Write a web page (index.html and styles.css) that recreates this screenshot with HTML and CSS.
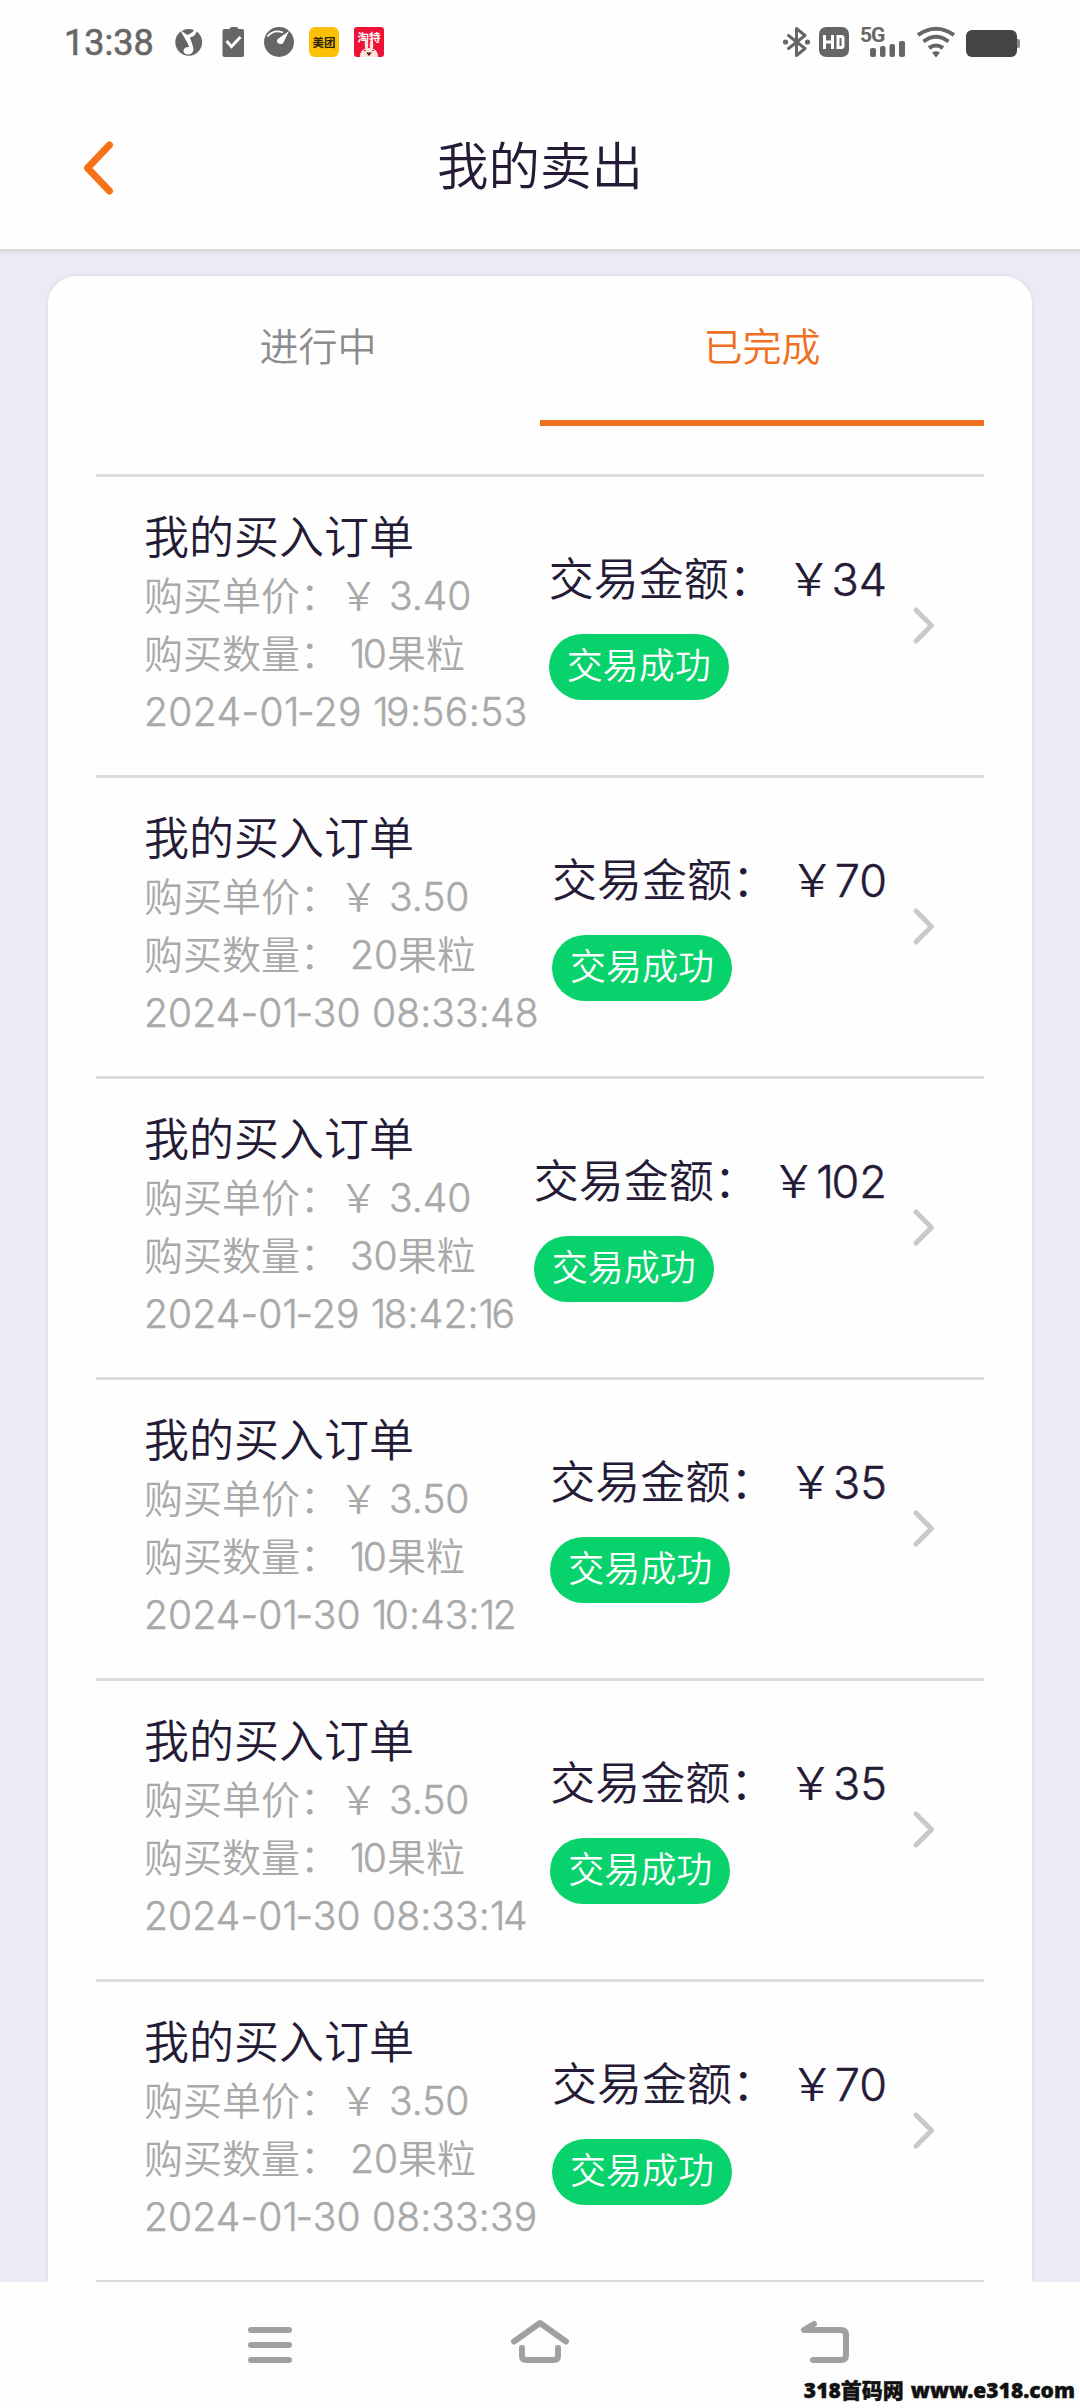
FILE: index.html
```html
<!DOCTYPE html>
<html lang="zh-CN">
<head>
<meta charset="utf-8">
<title>我的卖出</title>
<link rel="stylesheet" href="styles.css">
</head>
<body>
<div class="screen">
  <div class="status">
    <span class="time">13:38</span>
    <svg class="apps" width="224" height="84" viewBox="168 0 224 84">
      <circle cx="188.700" cy="42.300" r="13.400" fill="#666"/>
      <path d="M181 30.500l5.500 4 4.500 10-2 1-7-12z" fill="#fff"/>
      <path d="M185.500 35.500c3-1 6-1.500 9-6l2 1.500c-.5 4-3 5.500-6.500 6.500l3 9c1.500 5-1.500 8-5 8-3.500 0-5.500-3-4-5.500 1-1.500 3-2.300 5-2z" fill="#fff"/>
      <path d="M224.500 29h5c.5-1.500 1.500-2 3-2h3c1.500 0 2.500.5 3 2h3.500a2 2 0 0 1 2 2v24a2 2 0 0 1-2 2h-17.500a2 2 0 0 1-2-2v-24a2 2 0 0 1 2-2z" fill="#666"/>
      <path d="M226.500 41l5 5.500 9-9.500" fill="none" stroke="#fff" stroke-width="3"/>
      <circle cx="279" cy="42" r="15" fill="#666"/>
      <path d="M267.500 36.500c4-5 9-6.500 15.500-4" fill="none" stroke="#fff" stroke-width="1.800"/>
      <path d="M289 31l-5.500 11.500c-1.800 3-7 1.500-6.500-2 .2-1 .7-1.500 1.500-2z" fill="#fff"/>
      <rect x="309" y="27" width="30" height="30" rx="6" fill="#fcc006"/>
      <text x="324" y="46.500" class="logo dark">美团</text>
      <rect x="354" y="27" width="30" height="30" rx="3" fill="#ee1237"/>
      <text x="369" y="41.500" class="logo light">淘特</text>
      <g fill="#fde4df"><ellipse cx="366.500" cy="45" rx="1.700" ry="5"/><ellipse cx="371.500" cy="45" rx="1.700" ry="5"/><path d="M360 57c-1-12 19-12 18 0z"/></g>
      <path d="M366 52.500h6l-3 3.500z" fill="#711"/><path d="M364 50.500h1.500M372.500 50.500h1.500" stroke="#711" stroke-width="1.200"/>
    </svg>
    <svg class="signals" width="250" height="84" viewBox="780 0 250 84">
      <path d="M788.500 35.500l16.500 13-8.500 7v-27l8.500 7-16.500 13" fill="none" stroke="#666" stroke-width="3" stroke-linejoin="round" stroke-linecap="round"/>
      <circle cx="785.500" cy="42" r="2.600" fill="#666"/><circle cx="807.500" cy="42" r="2.600" fill="#666"/>
      <rect x="819" y="27" width="30" height="30" rx="7" fill="#666"/>
      <path d="M824.500 35v14M832.500 35v14M824.500 42h8M838 36.500h3.500q1.500 0 1.500 1.500v8q0 1.500-1.500 1.500h-3.500z" fill="none" stroke="#fff" stroke-width="3"/>
      <text x="860" y="41.500" class="net">5G</text>
      <g fill="#666"><rect x="870" y="48" width="6" height="9" rx="2"/><rect x="880" y="46" width="5.500" height="11" rx="2"/><rect x="889.500" y="44" width="5.500" height="13" rx="2"/><rect x="899" y="41" width="6" height="16" rx="2"/></g>
      <g fill="none" stroke="#666" stroke-width="4"><path d="M918 35q18-12.500 36 0"/><path d="M923.500 41.500q12.500-9.500 25 0"/><path d="M929 48q7-5 14 0"/></g>
      <path d="M932 52.500q4-2.500 8 0l-4 5z" fill="#666"/>
      <rect x="1014" y="39" width="6" height="9" rx="2" fill="#888"/>
      <rect x="966" y="30" width="51" height="27" rx="6" fill="#444"/>
    </svg>
  </div>
  <header class="header">
    <svg class="back" width="40" height="60" viewBox="0 0 40 60"><path d="M31.500 8L9.500 31l22 23" fill="none" stroke="#f67118" stroke-width="7" stroke-linecap="round" stroke-linejoin="round"/></svg>
    <h1>我的卖出</h1>
  </header>
  <main class="page">
    <section class="card">
      <nav class="tabs"><a class="tab">进行中</a><a class="tab active">已完成</a></nav>
      <article class="order">
        <div class="info"><h2>我的买入订单</h2><p>购买单价：￥ <s>3.40</s></p><p>购买数量： <s><i>1</i>0</s>果粒</p><p class="date wide">2024-0<i>1</i>-29 <i>1</i>9:56:53</p></div>
        <div class="deal"><p>交易金额： ￥<s>34</s></p><span class="pill">交易成功</span></div>
        <svg class="more" viewBox="0 0 24 40"><path d="M4 5l15.500 15.500L4 36"/></svg>
      </article>
      <article class="order">
        <div class="info"><h2>我的买入订单</h2><p>购买单价：￥ <s>3.50</s></p><p>购买数量： <s>20</s>果粒</p><p class="date">2024-0<i>1</i>-30 08:33:48</p></div>
        <div class="deal"><p>交易金额： ￥<s>70</s></p><span class="pill">交易成功</span></div>
        <svg class="more" viewBox="0 0 24 40"><path d="M4 5l15.500 15.500L4 36"/></svg>
      </article>
      <article class="order">
        <div class="info"><h2>我的买入订单</h2><p>购买单价：￥ <s>3.40</s></p><p>购买数量： <s>30</s>果粒</p><p class="date">2024-0<i>1</i>-29 <i>1</i>8:42:<i>1</i>6</p></div>
        <div class="deal"><p>交易金额： ￥<s><i>1</i>02</s></p><span class="pill">交易成功</span></div>
        <svg class="more" viewBox="0 0 24 40"><path d="M4 5l15.500 15.500L4 36"/></svg>
      </article>
      <article class="order">
        <div class="info"><h2>我的买入订单</h2><p>购买单价：￥ <s>3.50</s></p><p>购买数量： <s><i>1</i>0</s>果粒</p><p class="date">2024-0<i>1</i>-30 <i>1</i>0:43:<i>1</i>2</p></div>
        <div class="deal"><p>交易金额： ￥<s>35</s></p><span class="pill">交易成功</span></div>
        <svg class="more" viewBox="0 0 24 40"><path d="M4 5l15.500 15.500L4 36"/></svg>
      </article>
      <article class="order">
        <div class="info"><h2>我的买入订单</h2><p>购买单价：￥ <s>3.50</s></p><p>购买数量： <s><i>1</i>0</s>果粒</p><p class="date">2024-0<i>1</i>-30 08:33:<i>1</i>4</p></div>
        <div class="deal"><p>交易金额： ￥<s>35</s></p><span class="pill">交易成功</span></div>
        <svg class="more" viewBox="0 0 24 40"><path d="M4 5l15.500 15.500L4 36"/></svg>
      </article>
      <article class="order">
        <div class="info"><h2>我的买入订单</h2><p>购买单价：￥ <s>3.50</s></p><p>购买数量： <s>20</s>果粒</p><p class="date">2024-0<i>1</i>-30 08:33:39</p></div>
        <div class="deal"><p>交易金额： ￥<s>70</s></p><span class="pill">交易成功</span></div>
        <svg class="more" viewBox="0 0 24 40"><path d="M4 5l15.500 15.500L4 36"/></svg>
      </article>
      <div class="order-end"></div>
    </section>
  </main>
  <footer class="navbar">
    <svg viewBox="240 2315 60 54"><path d="M251 2330h38M251 2345h38M251 2360h38"/></svg>
    <svg viewBox="510 2315 60 54"><path d="M514 2341.500L540 2323l26 18.500M522 2348v8q0 4 4 4h28q4 0 4-4v-8"/></svg>
    <svg viewBox="795 2315 60 54"><path d="M814 2324l-10 6h37q5 0 5 5v20q0 5-5 5h-28"/></svg>
    <span class="watermark"><b>318首码网</b><b>www.e318.com</b></span>
  </footer>
</div>
</body>
</html>
```
FILE: styles.css
```css
* { box-sizing: border-box; margin: 0; padding: 0; }
body { background: #ebebf5; font-family: Inter, "Noto Sans CJK SC", sans-serif; color: #251b37; }
.screen { width: 1080px; height: 2408px; display: flex; flex-direction: column; overflow: hidden; }
svg { display: block; }
.status { height: 84px; display: flex; background: #fefefe; padding-left: 64px; flex: none; }
.time { width: 104px; font: 400 36px/86px Roboto, sans-serif; color: #666; -webkit-text-stroke: .6px #666; }
.signals { margin-left: 388px; }
.logo { font: 700 11.500px "Noto Sans CJK SC", sans-serif; text-anchor: middle; }
.dark { fill: #2b2108; }
.light { fill: #fff; }
.net { font: 700 21px Roboto, sans-serif; fill: #666; letter-spacing: -1px; }
.header { height: 168px; flex: none; background: #fefefe; border-bottom: 3px solid #dcdce0; display: grid; grid-template-columns: 160px 1fr 160px; align-items: center; box-shadow: 0 1px 5px rgba(0,0,0,.05); }
.back { margin-left: 78px; }
h1 { font-size: 51.500px; line-height: 78px; margin-bottom: 2px; font-weight: 350; text-align: center; }
.page { flex: 1; min-height: 0; overflow: hidden; padding: 24px 48px 0; }
.card { background: #fefefe; border-radius: 28px 28px 0 0; padding: 0 48px; height: 2100px; box-shadow: 0 0 5px rgba(0,0,0,.08); }
.tabs { display: grid; grid-template-columns: 1fr 1fr; height: 198px; padding-bottom: 48px; }
.tab { text-align: center; font-size: 39px; line-height: 142px; font-weight: 350; color: #8c8c90; }
.active { color: #ee7020; border-bottom: 6px solid #ee7020; }
.order { height: 301px; border-top: 3px solid #dcdce0; display: flex; padding: 32px 48px 0; }
.order-end { border-top: 3px solid #dcdce0; }
.info { width: 0; white-space: nowrap; font-weight: 350; }
.info h2 { font-size: 45px; line-height: 58px; font-weight: 350; }
.info p { font-size: 39px; line-height: 58px; color: #a9a9a9; }
.info .date { letter-spacing: .15px; -webkit-text-stroke: .5px; }
.info .wide { letter-spacing: .4px; }
.deal { margin-left: auto; margin-right: 25px; padding-top: 38px; font-weight: 350; white-space: nowrap; }
.deal p { font-size: 45px; line-height: 66px; }
i { font-style: normal; letter-spacing: -2.500px; }
s { text-decoration: none; -webkit-text-stroke: .5px; }
.pill { display: block; width: 180px; height: 66px; margin-top: 21px; border-radius: 33px; background: #07d26b; color: #fff; font-size: 36px; line-height: 65px; text-align: center; }
.more { width: 24px; height: 40px; margin-top: 96px; flex: none; fill: none; stroke: #c9c9c9; stroke-width: 5; stroke-linecap: round; stroke-linejoin: round; }
.navbar { height: 126px; flex: none; background: #fdfdfd; display: flex; padding: 33px 0 0 240px; position: relative; }
.navbar svg { width: 60px; height: 54px; fill: none; stroke: #a0a0a0; stroke-width: 6; stroke-linecap: round; stroke-linejoin: round; }
.navbar svg + svg { margin-left: 210px; }
.navbar svg + svg + svg { margin-left: 225px; }
.watermark { position: absolute; right: 5px; bottom: 1px; display: flex; gap: 7px; color: #111; font: 700 21px/34px "Noto Sans", "Noto Sans CJK SC", sans-serif; -webkit-text-stroke: .4px #111; }
```
